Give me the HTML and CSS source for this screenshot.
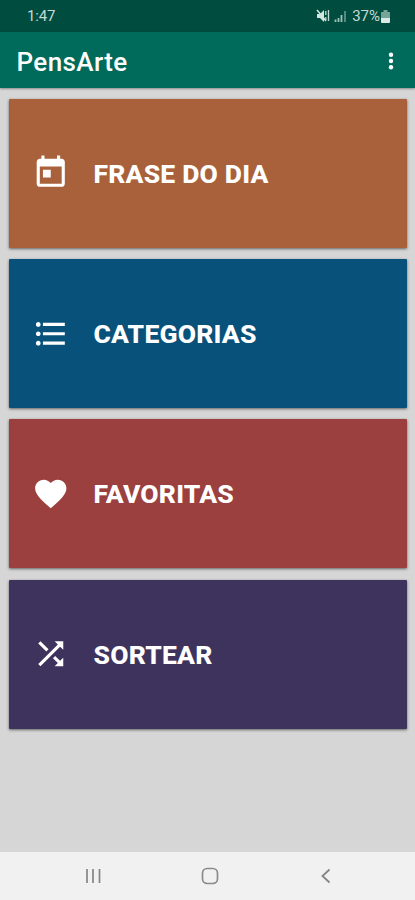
FILE: index.html
```html
<!DOCTYPE html>
<html lang="pt">
<head>
<meta charset="utf-8">
<title>PensArte</title>
<link rel="stylesheet" href="styles.css">
</head>
<body>
<div class="status">
  <span class="time">1:47</span>
  <div class="indicators">
    <svg class="mute" width="14" height="14" viewBox="0 0 14 14"><path d="M1 5h3l4-4v12L4 9H1z" fill="#d4e5e0"/><path d="M1 1l9 11" stroke="#d4e5e0" stroke-width="1.5"/><path d="M9.800 2v4M9.800 8v3M12.500 1v11" stroke="#c4dad4" stroke-width="1.300"/></svg>
    <svg class="signal" width="13" height="13" viewBox="0 0 13 13"><path d="M1.500 9.500v2.500M4.500 8v4M7.500 5v7" stroke="#9fc1b8" stroke-width="1.800"/><path d="M11 1v11" stroke="#5f9184" stroke-width="1.800"/></svg>
    <span class="percent">37%</span>
    <svg class="battery" width="9" height="13" viewBox="0 0 9 13"><path d="M2.500 0h4v2H9v6H0V2h2.500z" fill="#77a398"/><path d="M0 8h9v4a1 1 0 0 1-1 1H1a1 1 0 0 1-1-1z" fill="#dceae6"/></svg>
  </div>
</div>
<header class="toolbar">
  <h1>PensArte</h1>
  <svg class="more" width="6" height="20" viewBox="0 0 6 20"><g fill="#fff"><circle cx="3" cy="3.800" r="2.200"/><circle cx="3" cy="10" r="2.200"/><circle cx="3" cy="16.200" r="2.200"/></g></svg>
</header>
<main class="cards">
  <a class="card orange"><svg class="icon" viewBox="0 0 24 24"><path d="M19 3h-1V1h-2v2H8V1H6v2H5c-1.110 0-1.990.9-1.990 2L3 19c0 1.100.89 2 2 2h14c1.100 0 2-.9 2-2V5c0-1.100-.9-2-2-2zm0 16H5V8h14v11zM7 10h5v5H7z"/></svg><span>FRASE DO DIA</span></a>
  <a class="card blue"><svg class="icon" viewBox="0 0 24 24"><path d="M4 10.500c-.83 0-1.500.67-1.500 1.500s.67 1.500 1.500 1.500 1.500-.67 1.500-1.500-.67-1.500-1.500-1.500zm0-6c-.83 0-1.500.67-1.500 1.500S3.170 7.500 4 7.500 5.500 6.830 5.500 6 4.830 4.500 4 4.500zm0 12c-.83 0-1.500.68-1.500 1.500s.68 1.500 1.500 1.500 1.500-.68 1.500-1.500-.67-1.500-1.500-1.500zM7 19h14v-2H7v2zm0-6h14v-2H7v2zm0-8v2h14V5H7z"/></svg><span>CATEGORIAS</span></a>
  <a class="card red"><svg class="icon" viewBox="0 0 24 24"><path d="M12 21.350l-1.450-1.320C5.400 15.360 2 12.280 2 8.500 2 5.420 4.420 3 7.500 3c1.740 0 3.410.81 4.500 2.090C13.090 3.810 14.760 3 16.500 3 19.580 3 22 5.420 22 8.500c0 3.780-3.400 6.860-8.550 11.540L12 21.350z"/></svg><span>FAVORITAS</span></a>
  <a class="card purple"><svg class="icon" viewBox="0 0 24 24"><path d="M10.590 9.170L5.410 4 4 5.410l5.170 5.170 1.420-1.410zM14.500 4l2.040 2.040L4 18.590 5.410 20 17.960 7.460 20 9.500V4h-5.500zm.33 9.410l-1.410 1.410 3.130 3.130L14.500 20H20v-5.500l-2.040 2.040-3.130-3.130z"/></svg><span>SORTEAR</span></a>
</main>
<nav class="navbar">
  <svg width="18" height="18" viewBox="0 0 18 18"><path d="M3 2v14M9 2v14M15.500 2v14" stroke="#858585" stroke-width="1.700"/></svg>
  <svg width="18" height="18" viewBox="0 0 18 18"><rect x="1.500" y="1.500" width="15" height="15" rx="4.700" fill="none" stroke="#8b8b8b" stroke-width="1.700"/></svg>
  <svg width="18" height="18" viewBox="0 0 18 18"><path d="M12.500 2.500L5.500 9l7 6.500" fill="none" stroke="#858585" stroke-width="1.800"/></svg>
</nav>
</body>
</html>
```
FILE: styles.css
```css
* { box-sizing: border-box; }
body {
  margin: 0;
  height: 900px;
  display: flex;
  flex-direction: column;
  overflow: hidden;
  background: #d6d6d6;
  font-family: Roboto, "Liberation Sans", sans-serif;
}
.status {
  height: 32px;
  flex: none;
  display: flex;
  justify-content: space-between;
  align-items: center;
  padding: 0 25px 0 27px;
  background: #004c3f;
  color: #c4dad4;
  font-size: 15px;
}
.time { letter-spacing: -0.2px; }
.indicators { display: flex; align-items: center; }
.signal { margin-left: 4px; }
.percent { margin-left: 5px; }
.battery { margin-left: 1px; }
.toolbar {
  height: 56px;
  flex: none;
  display: flex;
  align-items: center;
  justify-content: space-between;
  padding: 1px 21px 0 16.500px;
  background: #006b5b;
  box-shadow: 0 1px 2px rgba(0, 0, 0, .35);
  color: #fff;
}
h1 { margin: 2px 0 0; font-size: 26px; font-weight: 500; line-height: 32px; letter-spacing: .4px; }
.cards {
  flex: 1;
  display: flex;
  flex-direction: column;
  gap: 11.400px;
  padding: 10.500px 8px 0 9px;
}
.card {
  height: 149px;
  flex: none;
  display: flex;
  align-items: center;
  padding-left: 23px;
  border-radius: 1px;
  box-shadow: 0 1px 3px rgba(0, 0, 0, .55);
  color: #fff;
  font-size: 26.500px;
  font-weight: 800;
  line-height: 32px;
  letter-spacing: .2px;
  white-space: nowrap;
}
.card span { margin: 1px 0 0 24px; }
.icon { width: 37.500px; height: 37.500px; flex: none; fill: #fff; }
.orange { background: #a9613b; }
.blue { background: #08517b; }
.red { background: #9b403f; }
.purple { background: #3e335d; }
.navbar {
  height: 48px;
  flex: none;
  display: flex;
  align-items: center;
  justify-content: space-between;
  padding: 0 80px 0 84px;
  background: #f1f1f1;
}
```
